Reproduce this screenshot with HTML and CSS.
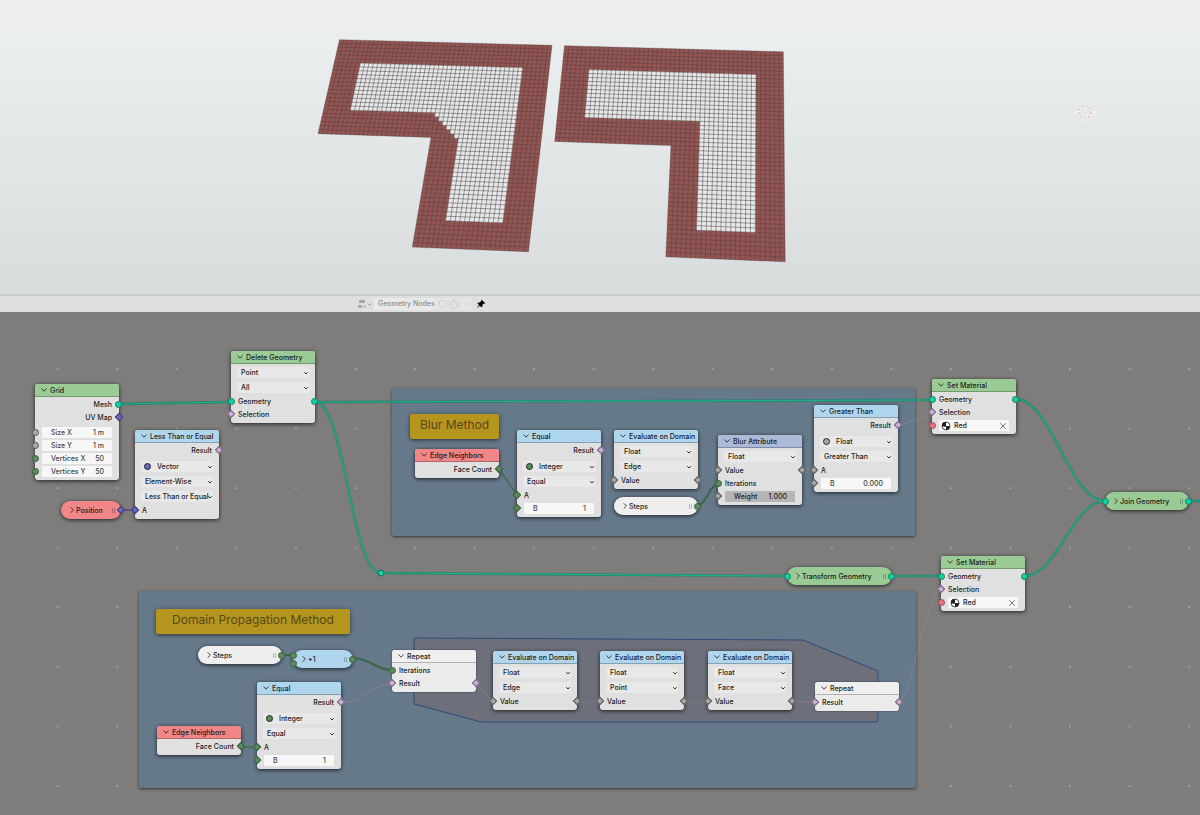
FILE: index.html
```html
<!DOCTYPE html>
<html lang="en">
<head>
    <meta charset="UTF-8">
    <meta name="viewport" content="width=device-width, initial-scale=1.0">
    <title>Geometry Nodes</title>
    <link rel="stylesheet" href="styles.css">
</head>
<body>

    <!-- Shared icons -->
    <svg class="icon-defs" width="0" height="0" aria-hidden="true">
        <symbol id="i-open" viewBox="0 0 8 8"><path d="M1.5 2.5 4 5.2 6.5 2.5" fill="none" stroke="currentColor" stroke-width="0.8"/></symbol>
        <symbol id="i-closed" viewBox="0 0 8 8"><path d="M2.7 1.3 5.4 4 2.7 6.7" fill="none" stroke="currentColor" stroke-width="0.8"/></symbol>
        <symbol id="i-caret" viewBox="0 0 6 6"><path d="M1.2 2.2 3 4 4.8 2.2" fill="none" stroke="currentColor" stroke-width="0.9"/></symbol>
        <symbol id="i-close" viewBox="0 0 8 8"><path d="M1.2 1.2 6.8 6.8M6.8 1.2 1.2 6.8" fill="none" stroke="currentColor" stroke-width="0.6"/></symbol>
        <symbol id="i-material" viewBox="0 0 10 10">
            <circle cx="5" cy="5" r="4" fill="#fff" stroke="#222" stroke-width="0.8"/>
            <path d="M5 5V1A4 4 0 0 0 1 5ZM5 5h4A4 4 0 0 1 5 9Z" fill="#222"/>
            <path d="M5 1A4 4 0 0 0 1 5C2 6 4.300 6 5 5.200Z" fill="#222"/>
        </symbol>
    </svg>

    <section class="viewport">
        <svg class="scene" width="100%" height="294" role="img" aria-label="Two meshes with red borders">
            <g id="mesh-blur"></g>
            <g id="mesh-propagate"></g>
            <g class="cursor3d">
                <path d="M1085 101v6M1085 117v6M1074 112h6M1090 112h6"/>
                <circle class="ring" cx="1085" cy="112" r="6"/>
                <circle class="ring-red" cx="1085" cy="112" r="6"/>
            </g>
        </svg>
    </section>

    <header class="editor-bar">
        <button class="bar-btn tree-btn" aria-label="Browse node trees">
            <svg width="16" height="10" viewBox="0 0 16 10">
                <rect x="2" y="1" width="6" height="3" rx="1" fill="#a6a6a6"/>
                <rect x="1" y="6" width="4" height="3" rx="1" fill="#a6a6a6"/>
                <rect x="6" y="6" width="3" height="3" rx="1" fill="#c2c2c2"/>
                <path d="M11 4.500 12.700 6.200 14.400 4.500" fill="none" stroke="#888" stroke-width="0.9"/>
            </svg>
        </button>
        <input class="tree-name" type="text" value="Geometry Nodes" aria-label="Node tree name">
        <button class="bar-btn" aria-label="Fake user"><svg width="10" height="10" viewBox="0 0 10 10"><path d="M5 1 8.500 2.200V5C8.500 7 7 8.400 5 9.200 3 8.400 1.500 7 1.500 5V2.200Z" fill="none" stroke="#c9c9c9" stroke-width="0.8"/></svg></button>
        <button class="bar-btn" aria-label="New node tree"><svg width="10" height="10" viewBox="0 0 10 10"><path d="M3 3V1h3.500L9 3.500V7H7M1 3h3.500L7 5.500V9H1Z" fill="none" stroke="#c9c9c9" stroke-width="0.8"/></svg></button>
        <button class="bar-btn" aria-label="Unlink"><svg width="8" height="8"><use href="#i-close"/></svg></button>
        <button class="pin-btn" aria-label="Pin">
            <svg width="10" height="10" viewBox="0 0 10 10"><path d="M5.600 0.800 9.300 4.200 8.300 4.800 7.700 4.600 6.300 6.100 6.300 8 5.500 8.300 3.800 6.700 0.800 9.300 3 5.900 1.500 4.400 2 3.600 3.900 3.600 5.300 2.100 5.100 1.500Z" fill="#000"/></svg>
        </button>
    </header>

    <main class="canvas">
        <svg class="dots" width="100%" height="100%" aria-hidden="true">
            <defs>
                <pattern id="minor" x="51.700" y="51" width="11.910" height="11.910" patternUnits="userSpaceOnUse">
                    <circle cx="6" cy="6" r="0.600" fill="#908e8e"/>
                </pattern>
                <pattern id="major" x="51.700" y="51" width="59.550" height="59.550" patternUnits="userSpaceOnUse">
                    <circle cx="6" cy="6" r="0.900" fill="#b0adad"/>
                </pattern>
            </defs>
            <rect width="100%" height="100%" fill="url(#minor)"/>
            <rect width="100%" height="100%" fill="url(#major)"/>
        </svg>

        <div class="frame frame-blur"></div>
        <div class="frame frame-domain"></div>

        <!-- Repeat zone and links -->
        <svg class="links" width="100%" height="100%" aria-hidden="true">
            <path class="zone" d="M416 326 803 328 878 359V408Q878 410 876 410H481L414 392V328Q414 326 416 326Z"/>
            <g class="link-geo">
                <path d="M119 92 231 90"/>
                <path d="M315 90 932 88"/>
                <path d="M315 90C345 90 351 261 381 261"/>
                <path d="M381 261 787 264H941"/>
                <path d="M1016 87C1052 87 1069 189 1105 189"/>
                <path d="M1025 264C1058 264 1072 189 1105 189"/>
                <path d="M1189 189H3000"/>
            </g>
            <g class="link-geo-core">
                <path d="M119 92 231 90"/>
                <path d="M315 90 932 88"/>
                <path d="M315 90C345 90 351 261 381 261"/>
                <path d="M381 261 787 264H941"/>
                <path d="M1016 87C1052 87 1069 189 1105 189"/>
                <path d="M1025 264C1058 264 1072 189 1105 189"/>
                <path d="M1189 189H3000"/>
            </g>
            <path class="link-vector" d="M121 198H135"/>
            <g class="link-int">
                <path d="M499 157 517 183"/>
                <path class="thick" d="M698 193C706 193 710 172 718 172"/>
                <path d="M241 435H257"/>
                <path class="thick" d="M282 343H294"/>
                <path class="thick" d="M353 346C370 346 375 358 392 358"/>
            </g>
            <g class="link-bool">
                <path d="M898 114 930 102"/>
                <path d="M341 391C362 391 371 372 392 372"/>
                <path d="M476 371 493 390"/>
                <path d="M792 390H815"/>
                <path d="M899 390C912 385 925 282 941 277"/>
            </g>
            <g class="link-float">
                <path d="M698 168 718 159"/>
                <path d="M577 390H600"/>
                <path d="M684 390H708"/>
                <path d="M601 139 614 168"/>
            </g>
            <circle class="reroute" cx="381" cy="261" r="3"/>
        </svg>

        <h2 class="note note-blur">Blur Method</h2>
        <h2 class="note note-domain">Domain Propagation Method</h2>

        <article class="node n-grid">
            <h3 class="head green"><button aria-label="Collapse"><svg><use href="#i-open"/></svg></button>Grid</h3>
            <div class="row out">Mesh<i class="socket right geo"></i></div>
            <div class="row out">UV Map<i class="socket right diamond vector"></i></div>
            <div class="row gap"><i class="socket left float"></i><div class="field"><label for="size-x">Size X</label><input id="size-x" value="1 m"></div></div>
            <div class="row"><i class="socket left float"></i><div class="field"><label for="size-y">Size Y</label><input id="size-y" value="1 m"></div></div>
            <div class="row"><i class="socket left int"></i><div class="field"><label for="vert-x">Vertices X</label><input id="vert-x" value="50"></div></div>
            <div class="row"><i class="socket left int"></i><div class="field"><label for="vert-y">Vertices Y</label><input id="vert-y" value="50"></div></div>
        </article>

        <article class="node n-delete">
            <h3 class="head green"><button aria-label="Collapse"><svg><use href="#i-open"/></svg></button>Delete Geometry</h3>
            <div class="pick"><select aria-label="Domain"><option>Point</option></select><svg><use href="#i-caret"/></svg></div>
            <div class="pick"><select aria-label="Mode"><option>All</option></select><svg><use href="#i-caret"/></svg></div>
            <div class="row"><i class="socket left geo"></i>Geometry<i class="socket right geo"></i></div>
            <div class="row"><i class="socket left diamond bool"></i>Selection</div>
        </article>

        <article class="node n-less">
            <h3 class="head blue"><button aria-label="Collapse"><svg><use href="#i-open"/></svg></button>Less Than or Equal</h3>
            <div class="row out">Result<i class="socket right diamond bool"></i></div>
            <div class="pick typed gap"><i class="type vector"></i><select aria-label="Data type"><option>Vector</option></select><svg><use href="#i-caret"/></svg></div>
            <div class="pick"><select aria-label="Mode"><option>Element-Wise</option></select><svg><use href="#i-caret"/></svg></div>
            <div class="pick"><select aria-label="Operation"><option>Less Than or Equal</option></select><svg><use href="#i-caret"/></svg></div>
            <div class="row"><i class="socket left diamond vector"></i>A</div>
        </article>

        <article class="pill red n-position"><i class="socket right diamond vector"></i><button aria-label="Expand"><svg><use href="#i-closed"/></svg></button><h3>Position</h3><span class="grip"></span></article>

        <article class="node n-edges1">
            <h3 class="head red"><button aria-label="Collapse"><svg><use href="#i-open"/></svg></button>Edge Neighbors</h3>
            <div class="row out">Face Count<i class="socket right diamond int"></i></div>
        </article>

        <article class="node n-equal1">
            <h3 class="head blue"><button aria-label="Collapse"><svg><use href="#i-open"/></svg></button>Equal</h3>
            <div class="row out">Result<i class="socket right diamond bool"></i></div>
            <div class="pick typed gap"><i class="type int"></i><select aria-label="Data type"><option>Integer</option></select><svg><use href="#i-caret"/></svg></div>
            <div class="pick"><select aria-label="Operation"><option>Equal</option></select><svg><use href="#i-caret"/></svg></div>
            <div class="row"><i class="socket left diamond int"></i>A</div>
            <div class="row"><i class="socket left diamond int"></i><div class="field"><label for="eq1-b">B</label><input id="eq1-b" value="1"></div></div>
        </article>

        <article class="node n-eval1">
            <h3 class="head blue"><button aria-label="Collapse"><svg><use href="#i-open"/></svg></button>Evaluate on Domain</h3>
            <div class="pick"><select aria-label="Data type"><option>Float</option></select><svg><use href="#i-caret"/></svg></div>
            <div class="pick"><select aria-label="Domain"><option>Edge</option></select><svg><use href="#i-caret"/></svg></div>
            <div class="row"><i class="socket left diamond float"></i>Value<i class="socket right diamond float"></i></div>
        </article>

        <article class="pill white n-steps1"><i class="socket right int"></i><button aria-label="Expand"><svg><use href="#i-closed"/></svg></button><h3>Steps</h3><span class="grip"></span></article>

        <article class="node n-blurattr">
            <h3 class="head violet"><button aria-label="Collapse"><svg><use href="#i-open"/></svg></button>Blur Attribute</h3>
            <div class="pick"><select aria-label="Data type"><option>Float</option></select><svg><use href="#i-caret"/></svg></div>
            <div class="row"><i class="socket left diamond float"></i>Value<i class="socket right diamond float"></i></div>
            <div class="row"><i class="socket left int"></i>Iterations</div>
            <div class="row"><i class="socket left diamond float"></i><div class="field slider"><label for="weight">Weight</label><input id="weight" value="1.000"></div></div>
        </article>

        <article class="node n-greater">
            <h3 class="head blue"><button aria-label="Collapse"><svg><use href="#i-open"/></svg></button>Greater Than</h3>
            <div class="row out">Result<i class="socket right diamond bool"></i></div>
            <div class="pick typed gap"><i class="type float"></i><select aria-label="Data type"><option>Float</option></select><svg><use href="#i-caret"/></svg></div>
            <div class="pick"><select aria-label="Operation"><option>Greater Than</option></select><svg><use href="#i-caret"/></svg></div>
            <div class="row"><i class="socket left diamond float"></i>A</div>
            <div class="row"><i class="socket left diamond float"></i><div class="field"><label for="gt-b">B</label><input id="gt-b" value="0.000"></div></div>
        </article>

        <article class="node n-material1">
            <h3 class="head green"><button aria-label="Collapse"><svg><use href="#i-open"/></svg></button>Set Material</h3>
            <div class="row"><i class="socket left geo"></i>Geometry<i class="socket right geo"></i></div>
            <div class="row"><i class="socket left diamond bool"></i>Selection</div>
            <div class="row"><i class="socket left material"></i><div class="field mat"><svg><use href="#i-material"/></svg><input aria-label="Material" value="Red"><button aria-label="Unlink material"><svg><use href="#i-close"/></svg></button></div></div>
        </article>

        <article class="node n-material2">
            <h3 class="head green"><button aria-label="Collapse"><svg><use href="#i-open"/></svg></button>Set Material</h3>
            <div class="row"><i class="socket left geo"></i>Geometry<i class="socket right geo"></i></div>
            <div class="row"><i class="socket left diamond bool"></i>Selection</div>
            <div class="row"><i class="socket left material"></i><div class="field mat"><svg><use href="#i-material"/></svg><input aria-label="Material" value="Red"><button aria-label="Unlink material"><svg><use href="#i-close"/></svg></button></div></div>
        </article>

        <article class="pill green n-join"><i class="socket left geo"></i><i class="socket right geo"></i><button aria-label="Expand"><svg><use href="#i-closed"/></svg></button><h3>Join Geometry</h3><span class="grip"></span></article>
        <article class="pill green n-transform"><i class="socket left geo"></i><i class="socket right geo"></i><button aria-label="Expand"><svg><use href="#i-closed"/></svg></button><h3>Transform Geometry</h3><span class="grip"></span></article>

        <article class="pill white n-steps2"><i class="socket right int"></i><button aria-label="Expand"><svg><use href="#i-closed"/></svg></button><h3>Steps</h3><span class="grip"></span></article>
        <article class="pill blue n-plus"><i class="socket left upper int"></i><i class="socket left lower int"></i><i class="socket right int"></i><button aria-label="Expand"><svg><use href="#i-closed"/></svg></button><h3>+1</h3><span class="grip"></span></article>

        <article class="node n-equal2">
            <h3 class="head blue"><button aria-label="Collapse"><svg><use href="#i-open"/></svg></button>Equal</h3>
            <div class="row out">Result<i class="socket right diamond bool"></i></div>
            <div class="pick typed gap"><i class="type int"></i><select aria-label="Data type"><option>Integer</option></select><svg><use href="#i-caret"/></svg></div>
            <div class="pick"><select aria-label="Operation"><option>Equal</option></select><svg><use href="#i-caret"/></svg></div>
            <div class="row"><i class="socket left diamond int"></i>A</div>
            <div class="row"><i class="socket left diamond int"></i><div class="field"><label for="eq2-b">B</label><input id="eq2-b" value="1"></div></div>
        </article>

        <article class="node n-edges2">
            <h3 class="head red"><button aria-label="Collapse"><svg><use href="#i-open"/></svg></button>Edge Neighbors</h3>
            <div class="row out">Face Count<i class="socket right diamond int"></i></div>
        </article>

        <article class="node zone-node n-repeat1">
            <h3 class="head white"><button aria-label="Collapse"><svg><use href="#i-open"/></svg></button>Repeat</h3>
            <div class="row"><i class="socket left int"></i>Iterations</div>
            <div class="row"><i class="socket left diamond bool"></i>Result<i class="socket right diamond bool"></i></div>
        </article>

        <article class="node n-eval2">
            <h3 class="head blue"><button aria-label="Collapse"><svg><use href="#i-open"/></svg></button>Evaluate on Domain</h3>
            <div class="pick"><select aria-label="Data type"><option>Float</option></select><svg><use href="#i-caret"/></svg></div>
            <div class="pick"><select aria-label="Domain"><option>Edge</option></select><svg><use href="#i-caret"/></svg></div>
            <div class="row"><i class="socket left diamond float"></i>Value<i class="socket right diamond float"></i></div>
        </article>

        <article class="node n-eval3">
            <h3 class="head blue"><button aria-label="Collapse"><svg><use href="#i-open"/></svg></button>Evaluate on Domain</h3>
            <div class="pick"><select aria-label="Data type"><option>Float</option></select><svg><use href="#i-caret"/></svg></div>
            <div class="pick"><select aria-label="Domain"><option>Point</option></select><svg><use href="#i-caret"/></svg></div>
            <div class="row"><i class="socket left diamond float"></i>Value<i class="socket right diamond float"></i></div>
        </article>

        <article class="node n-eval4">
            <h3 class="head blue"><button aria-label="Collapse"><svg><use href="#i-open"/></svg></button>Evaluate on Domain</h3>
            <div class="pick"><select aria-label="Data type"><option>Float</option></select><svg><use href="#i-caret"/></svg></div>
            <div class="pick"><select aria-label="Domain"><option>Face</option></select><svg><use href="#i-caret"/></svg></div>
            <div class="row"><i class="socket left diamond float"></i>Value<i class="socket right diamond float"></i></div>
        </article>

        <article class="node zone-node n-repeat2">
            <h3 class="head white"><button aria-label="Collapse"><svg><use href="#i-open"/></svg></button>Repeat</h3>
            <div class="row"><i class="socket left diamond bool"></i>Result<i class="socket right diamond bool"></i></div>
        </article>
    </main>

    <script src="script.js"></script>
</body>
</html>
```
FILE: styles.css
```css
* {
    box-sizing: border-box;
}

body {
    margin: 0;
    min-height: 100vh;
    display: flex;
    flex-direction: column;
    overflow: hidden;
    font-family: Inter, "Liberation Sans", sans-serif;
    font-size: 7px;
    font-weight: 500;
    line-height: 13px;
    color: #1c1c1c;
}

h2, h3 {
    margin: 0;
    font-size: inherit;
    font-weight: inherit;
}

button, input, select {
    margin: 0;
    padding: 0;
    border: 0;
    background: none;
    font: inherit;
    color: inherit;
    appearance: none;
}

svg {
    display: block;
}

.icon-defs {
    position: absolute;
}

/* 3D viewport */
.viewport {
    background: linear-gradient(#edf0ef, #e4e8e8 45%, #d8dcdc);
    overflow: hidden;
}

.mesh-red {
    fill: #915553;
}

.mesh-white {
    fill: #e8e8e8;
}

.mesh-lines {
    fill: none;
    stroke: #272727;
    stroke-width: 0.7;
    stroke-opacity: 0.6;
}

.mesh-lines.soft {
    stroke: #3c3030;
    stroke-opacity: 0.42;
}

.cursor3d path {
    fill: none;
    stroke: #f6f8f8;
}

.cursor3d circle {
    fill: none;
    stroke: #fff;
    stroke-width: 1;
}

.cursor3d .ring-red {
    stroke: #d98f8f;
    stroke-dasharray: 2 2;
}

/* Bar above the node editor */
.editor-bar {
    display: flex;
    align-items: center;
    gap: 1px;
    height: 18px;
    padding: 0 0 1px 356px;
    background: #dedfdf;
    border-top: 2px solid #c9cccc;
}

.bar-btn {
    display: flex;
    align-items: center;
    justify-content: center;
    width: 11px;
    height: 12px;
    background: #e5e5e5;
    color: #c9c9c9;
}

.tree-btn {
    width: 17px;
    background: none;
}

.tree-name {
    width: 62px;
    height: 12px;
    padding-left: 4px;
    background: #e9e9e9;
    color: #8c8c8c;
}

.pin-btn {
    margin-left: 3px;
}

/* Node canvas */
.canvas {
    position: relative;
    flex: 1;
    background: #7f7c7c;
    overflow: hidden;
}

.dots, .links, .frame, .note, .node, .pill {
    position: absolute;
}

.dots, .links {
    inset: 0;
}

.frame {
    background: #66798a;
    border-radius: 2px;
    box-shadow: 0 1px 3px rgba(0, 0, 0, 0.6);
}

.frame-blur { left: 392px; top: 76px; width: 523px; height: 148px; }
.frame-domain { left: 139px; top: 279px; width: 777px; height: 197px; }

.note {
    height: 25px;
    border-radius: 2px;
    background: #b6951f;
    box-shadow: 0 1px 4px rgba(0, 0, 0, 0.6);
    color: #574814;
    font-size: 12px;
    font-weight: 400;
    line-height: 22px;
    text-align: center;
}

.note-blur { left: 410px; top: 102px; width: 89px; }
.note-domain { left: 156px; top: 297px; width: 194px; }

/* Links */
.links path {
    fill: none;
}

.links .zone {
    fill: #6d707b;
    stroke: #2f4b78;
}

.link-geo {
    stroke: #2d7d69;
    stroke-width: 2.4;
}

.link-geo-core {
    stroke: #1cb08c;
    stroke-width: 1.2;
}

.link-vector {
    stroke: #4d4a86;
    stroke-width: 1.5;
}

.link-int {
    stroke: #3c6449;
    stroke-width: 1.2;
}

.link-int .thick {
    stroke-width: 2;
}

.link-bool {
    stroke: #a08fa8;
    stroke-width: 0.7;
    stroke-opacity: 0.6;
}

.link-float {
    stroke: #8b8f96;
    stroke-width: 0.7;
    stroke-opacity: 0.4;
}

.reroute {
    fill: #0fd3a4;
    stroke: #1d6352;
}

/* Nodes */
.node {
    display: flex;
    flex-direction: column;
    width: 84px;
    padding-bottom: 2px;
    border-radius: 3px;
    background: #e0e0e0;
    box-shadow: 0 1px 4px rgba(0, 0, 0, 0.75);
}

.head {
    display: flex;
    align-items: center;
    gap: 2px;
    height: 13px;
    margin-bottom: 1px;
    padding-left: 5px;
    border-radius: 3px 3px 0 0;
    border-bottom: 1px solid rgba(0, 0, 0, 0.25);
    white-space: nowrap;
}

.head svg, .pill button svg {
    width: 8px;
    height: 8px;
}

.green { background: #9acb94; }
.blue { background: #b0d6ee; }
.red { background: #f08688; }
.violet { background: #adb9d9; }
.white { background: #efefef; }

.zone-node {
    background: #ebebeb;
    box-shadow: 0 0 2px rgba(20, 30, 60, 0.7);
}

.row {
    position: relative;
    height: 13px;
    padding: 0 7px;
}

.out {
    text-align: right;
}

.gap {
    margin-top: 2px;
}

.field {
    display: flex;
    align-items: center;
    height: 11px;
    margin: 1px 0;
    padding: 0 8px 0 9px;
    border-radius: 1px;
    background: #f7f7f7;
    line-height: 11px;
    color: #444;
}

.row:has(.field) {
    display: flex;
}

.row .field {
    flex: 1;
    min-width: 0;
}

.field label {
    white-space: nowrap;
}

.field input {
    flex: 1;
    min-width: 0;
    text-align: right;
}

.slider {
    background: #b5b5b5;
    color: #222;
}

.row .mat {
    gap: 3px;
    padding: 0 2px;
    color: #222;
}

.mat > svg {
    width: 10px;
    height: 10px;
}

.mat .socket, .mat input {
    text-align: left;
}

.mat button svg {
    width: 8px;
    height: 8px;
}

.pick {
    position: relative;
    display: flex;
    align-items: center;
    height: 11px;
    margin: 2px 6px;
    border-radius: 1px;
    background: #e8e8e8;
    line-height: 11px;
}

.pick.gap {
    margin-top: 4px;
}

.pick select {
    flex: 1;
    min-width: 0;
    height: 11px;
    padding-left: 4px;
    line-height: 11px;
}

/* Caret lies over the select so long names keep the full width */
.pick svg {
    position: absolute;
    top: 3px;
    right: 0;
    width: 6px;
    height: 6px;
    pointer-events: none;
}

.typed select {
    padding-left: 6px;
}

.type {
    width: 7px;
    height: 7px;
    margin-left: 3px;
    border: 1px solid #222;
    border-radius: 50%;
}

/* Sockets sit over the node's edge */
.socket {
    position: absolute;
    top: 3px;
    width: 7px;
    height: 7px;
    border: 1px solid #5a5a5a;
    border-radius: 50%;
}

.left { left: -3px; }
.right { right: -3px; }

.diamond {
    width: 6px;
    height: 6px;
    border-radius: 0;
    transform: rotate(45deg);
}

.geo { background: #0fd3a4; border-color: #1c7a63; }
.vector { background: #6a68c2; border-color: #3f3d7c; }
.bool { background: #cdb0d6; border-color: #77637f; }
.int { background: #5a8c5d; border-color: #3b5f40; }
.float { background: #a8a8a8; }
.material { background: #e8737f; border-color: #9a4b54; }

.type {
    border-color: #222;
}

/* Collapsed nodes */
.pill {
    display: flex;
    align-items: center;
    width: 84px;
    height: 18px;
    padding: 0 6px 0 7px;
    border-radius: 9px;
    box-shadow: 0 1px 4px rgba(0, 0, 0, 0.75);
    white-space: nowrap;
}

.pill .socket {
    top: 6px;
}

.pill .upper { top: 2px; }
.pill .lower { top: 10px; }

.grip {
    width: 3px;
    height: 5px;
    margin-left: auto;
    border: 1px solid rgba(0, 0, 0, 0.25);
    border-width: 0 1px;
}

/* Node places on the canvas */
.n-grid { left: 35px; top: 72px; }
.n-delete { left: 231px; top: 39px; }
.n-less { left: 135px; top: 118px; }
.n-position { left: 61px; top: 189px; width: 60px; }
.n-edges1 { left: 415px; top: 137px; }
.n-equal1 { left: 517px; top: 118px; }
.n-eval1 { left: 614px; top: 118px; }
.n-steps1 { left: 614px; top: 185px; }
.n-blurattr { left: 718px; top: 123px; }
.n-greater { left: 814px; top: 93px; }
.n-material1 { left: 932px; top: 67px; }
.n-material2 { left: 941px; top: 244px; }
.n-join { left: 1105px; top: 180px; }
.n-transform { left: 787px; top: 255px; width: 105px; }
.n-steps2 { left: 198px; top: 334px; }
.n-plus { left: 293px; top: 338px; width: 60px; }
.n-equal2 { left: 257px; top: 370px; }
.n-edges2 { left: 157px; top: 414px; }
.n-repeat1 { left: 392px; top: 338px; }
.n-eval2 { left: 493px; top: 339px; }
.n-eval3 { left: 600px; top: 339px; }
.n-eval4 { left: 708px; top: 339px; }
.n-repeat2 { left: 815px; top: 370px; }
```
FILE: script.js
```js
// Grid of 49x49 faces, with the front left quadrant removed
const N = 49;
const CUT_U = 25;
const CUT_V = 24;
const RING = 6;

// Solve a small linear system (Gauss-Jordan)
function solve(m) {
    const n = m.length;
    for (let c = 0; c < n; c++) {
        let p = c;
        for (let r = c + 1; r < n; r++) {
            if (Math.abs(m[r][c]) > Math.abs(m[p][c])) p = r;
        }
        [m[c], m[p]] = [m[p], m[c]];
        for (let r = 0; r < n; r++) {
            if (r === c) continue;
            const f = m[r][c] / m[c][c];
            for (let k = c; k <= n; k++) m[r][k] -= f * m[c][k];
        }
    }
    return m.map((row, i) => row[n] / row[i]);
}

// Perspective mapping from four [u, v, x, y] pairs
function projection(pairs) {
    const rows = [];
    pairs.forEach(([u, v, x, y]) => {
        rows.push([u, v, 1, 0, 0, 0, -u * x, -v * x, x]);
        rows.push([0, 0, 0, u, v, 1, -u * y, -v * y, y]);
    });
    const h = solve(rows);
    return (u, v) => {
        const w = h[6] * u + h[7] * v + 1;
        return [(h[0] * u + h[1] * v + h[2]) / w, (h[3] * u + h[4] * v + h[5]) / w];
    };
}

function drawMesh(id, pairs, inside) {
    const at = projection(pairs);
    const point = (u, v) => at(u, v).map(n => n.toFixed(2)).join(' ');
    const poly = pts => 'M' + pts.map(p => point(p[0], p[1])).join('L') + 'Z';

    const outline = [[0, 0], [N, 0], [N, N], [CUT_U, N], [CUT_U, CUT_V], [0, CUT_V]];
    let lines = '';
    for (let i = 0; i <= N; i++) {
        lines += `M${point(i, 0)}L${point(i, i < CUT_U ? CUT_V : N)}`;
        lines += `M${point(i <= CUT_V ? 0 : CUT_U, i)}L${point(N, i)}`;
    }

    // Lines are softer on the red faces than on the white ones
    document.getElementById(id).innerHTML =
        `<clipPath id="${id}-inside"><path d="${poly(inside)}"/></clipPath>` +
        `<path class="mesh-red" d="${poly(outline)}"/>` +
        `<path class="mesh-lines soft" d="${lines}"/>` +
        `<path class="mesh-white" d="${poly(inside)}"/>` +
        `<path class="mesh-lines" clip-path="url(#${id}-inside)" d="${lines}"/>`;
}

const far = N - RING;
const armEnd = CUT_V - RING;
const leg = CUT_U + RING;

// The blurred border steps diagonally round the inner corner
const stairs = [];
for (let i = 0; i < RING; i++) {
    stairs.push([leg - i, CUT_V - i], [leg - i - 1, CUT_V - i]);
}

drawMesh('mesh-blur',
    [[0, 0, 339.5, 39.7], [N, 0, 552, 45.3], [N, N, 528.5, 251.7], [0, CUT_V, 318, 133.7]],
    [[RING, RING], [far, RING], [far, far], [leg, far], ...stairs, [CUT_U, armEnd], [RING, armEnd]]);

drawMesh('mesh-propagate',
    [[0, 0, 564.5, 45.7], [N, 0, 783.3, 51.8], [N, N, 785.2, 261.8], [0, CUT_V, 554.7, 141.5]],
    [[RING, RING], [far, RING], [far, far], [leg, far], [leg, armEnd], [RING, armEnd]]);
```
